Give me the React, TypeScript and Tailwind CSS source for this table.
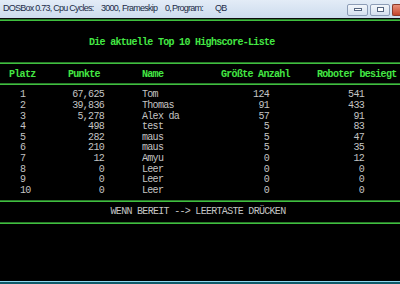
const rows = [
  ["1", "67,625", "Tom", "124", "541"],
  ["2", "39,836", "Thomas", "91", "433"],
  ["3", "5,278", "Alex da", "57", "91"],
  ["4", "498", "test", "5", "83"],
  ["5", "282", "maus", "5", "47"],
  ["6", "210", "maus", "5", "35"],
  ["7", "12", "Amyu", "0", "12"],
  ["8", "0", "Leer", "0", "0"],
  ["9", "0", "Leer", "0", "0"],
  ["10", "0", "Leer", "0", "0"],
];

function GreenLine() {
  return (
    <div className="shrink-0">
      <div className="h-px bg-[#2a7a2a]" />
      <div className="h-px bg-[#3fbf3f]" />
    </div>
  );
}

function TitleBar() {
  return (
    <div className="h-[18px] shrink-0 flex items-center bg-gradient-to-b from-[#e3ecf7] to-[#cddcee] text-[9px] tracking-[-0.75px] text-[#1c2c48] font-['Liberation_Sans',sans-serif] whitespace-pre">
      <span className="pl-[3px] w-[101px] shrink-0">DOSBox 0.73, Cpu Cycles:</span>
      <span className="w-[21px] shrink-0">3000,</span>
      <span className="w-[43px] shrink-0">Frameskip</span>
      <span className="w-[7px] shrink-0">0,</span>
      <span className="w-[43px] shrink-0">Program:</span>
      <span>QB</span>
      <div className="ml-auto flex items-center gap-[2px] pt-px">
        <div className="w-[21px] h-[12px] rounded-[2px] border border-[#8c9cb6] bg-gradient-to-b from-[#f2f6fb] to-[#d5e0ee] flex items-center justify-center">
          <div className="w-[8px] h-[3px] border border-[#55657f] bg-white" />
        </div>
        <div className="w-[20px] h-[12px] rounded-[2px] border border-[#8c9cb6] bg-gradient-to-b from-[#f2f6fb] to-[#d5e0ee] flex items-center justify-center">
          <div className="w-[7px] h-[5px] border border-[#55657f] bg-white" />
        </div>
        <div className="w-[8px] h-[12px] rounded-l-[2px] border border-r-0 border-[#8a3a2a] bg-gradient-to-b from-[#e8907a] to-[#c4442a]" />
      </div>
    </div>
  );
}

export default function App() {
  return (
    <div className="h-[284px] w-[400px] flex flex-col bg-black overflow-hidden font-['Liberation_Mono',monospace] text-[10px] tracking-[-0.7px]">
      <TitleBar />
      <div className="h-px bg-[#0a0a0a] shrink-0" />
      <GreenLine />
      <div className="pt-[16px] pb-[14px] pl-[89px] leading-[11px] font-bold text-[#44e844]">
        Die aktuelle Top 10 Highscore-Liste
      </div>
      <GreenLine />
      <div className="pt-[4.5px] pb-[3.5px] leading-[11px] font-bold text-[#44e844] grid grid-cols-[60px_82px_79px_96px_83px]">
        <span className="pl-[9px]">Platz</span>
        <span className="pl-[8px]">Punkte</span>
        <span>Name</span>
        <span>Größte Anzahl</span>
        <span>Roboter besiegt</span>
      </div>
      <GreenLine />
      <div className="pt-[5.4px] pb-[3.6px] text-[#c4c4c4]">
        {rows.map((r) => (
          <div key={r[0]} className="h-[10.6px] leading-[10.6px] grid grid-cols-[60px_82px_79px_96px_83px]">
            <span className="pl-[20px]">{r[0]}</span>
            <span className="text-right pr-[38px]">{r[1]}</span>
            <span>{r[2]}</span>
            <span className="text-right pr-[48px]">{r[3]}</span>
            <span className="text-right pr-[36px]">{r[4]}</span>
          </div>
        ))}
      </div>
      <GreenLine />
      <div className="pt-[4.5px] pb-[4.5px] leading-[11px] text-[#c4c4c4] text-center pr-[4px]">
        WENN BEREIT --&gt; LEERTASTE DRÜCKEN
      </div>
      <GreenLine />
      <div className="flex-1" />
      <div className="h-px bg-[#8fd6ee] shrink-0" />
      <div className="h-[2px] bg-[#0f5a68] shrink-0" />
    </div>
  );
}
